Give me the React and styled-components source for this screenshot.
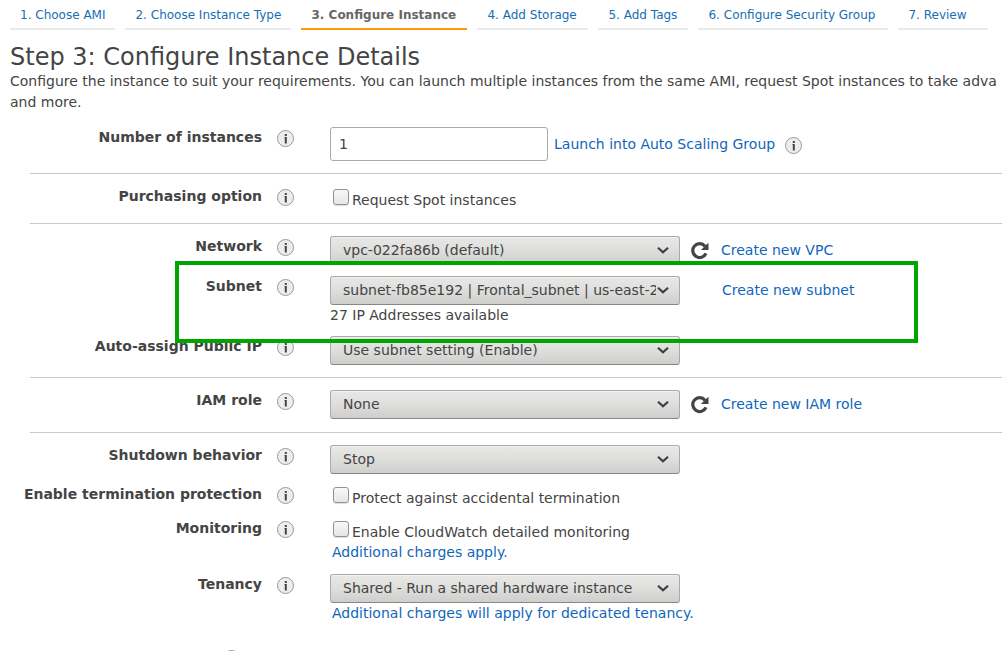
import React from "react";
import styled, { createGlobalStyle } from "styled-components";

const GlobalStyle = createGlobalStyle`
  * { box-sizing: border-box; }
  body {
    margin: 0;
    background: #fff;
    color: #444;
    font: 14px/21px "DejaVu Sans", Verdana, sans-serif;
  }
`;

const Page = styled.main`
  height: 100vh;
  overflow: hidden;
`;

const Steps = styled.nav`
  display: flex;
  gap: 10px;
  padding: 0 10px;
`;

const Step = styled.a`
  flex: none;
  min-width: ${(p) => p.$min}px;
  height: 30px;
  padding: 0 10px;
  border-bottom: 2px solid ${(p) => (p.$active ? "#ff9912" : "#eaeaea")};
  color: ${(p) => (p.$active ? "#666" : "#146eb4")};
  font-size: 12px;
  font-weight: ${(p) => (p.$active ? "bold" : "normal")};
  line-height: 30px;
  text-decoration: none;
  white-space: nowrap;
`;

const Title = styled.h1`
  margin: 0;
  padding: 13px 10px 0;
  font-size: 24px;
  font-weight: normal;
  line-height: 28px;
`;

const Intro = styled.p`
  margin: 0;
  padding: 0 10px 14px;
  white-space: nowrap;
`;

const Group = styled.div`
  display: flex;
  flex-direction: column;
  gap: 10px;
`;

const Divider = styled.hr`
  margin: 12px 0 12px 30px;
  border: 0;
  border-top: 1px solid #c8c8c8;
`;

const Row = styled.div`
  position: relative;
  display: grid;
  grid-template-columns: 262px 17px 1fr;
  align-items: start;
  min-height: ${(p) => p.$min || 24}px;
`;

const Label = styled.label`
  font-weight: bold;
  text-align: right;
  white-space: nowrap;
`;

const InfoButton = styled.button`
  display: block;
  flex: none;
  width: 18px;
  height: 18px;
  margin: ${(p) => (p.$inline ? "3px 0 0 10px" : "3px 0 0 15px")};
  padding: 0;
  border: 0;
  background: none;
  svg { display: block; }
`;

const Field = styled.div`
  padding-left: 51px;
`;

const Line = styled.div`
  display: flex;
  align-items: center;
`;

const TextInput = styled.input`
  width: 218px;
  height: 34px;
  margin: 0 6px 0 0;
  padding: 0 8px;
  border: 1px solid #aaa;
  border-radius: 3px;
  color: #444;
  font: inherit;
`;

const SelectBox = styled.span`
  position: relative;
  display: block;
  flex: none;
  width: 350px;
  height: 29px;
  svg {
    position: absolute;
    top: 10px;
    right: 11px;
    pointer-events: none;
  }
`;

const NativeSelect = styled.select`
  appearance: none;
  display: block;
  width: 100%;
  height: 100%;
  margin: 0;
  padding: 0 23px 0 12px;
  border: 1px solid #aaa;
  border-bottom-color: #888883;
  border-radius: 3px;
  background: linear-gradient(#e8e8e7, #dededd 50%, #cececc);
  box-shadow: inset 0 1px #f2f2f2;
  color: #444;
  font: inherit;
`;

const Refresh = styled.button`
  width: 18px;
  height: 18px;
  margin: 0 12px 0 11px;
  padding: 0;
  border: 0;
  background: none;
  svg { display: block; }
`;

const Link = styled.a`
  color: #1166bb;
  text-decoration: none;
  white-space: nowrap;
`;

const AsideLink = styled(Link)`
  margin-left: 42px;
`;

const Note = styled.div`
  padding-left: ${(p) => (p.$indent ? 2 : 0)}px;
`;

const CheckLine = styled.label`
  display: flex;
  align-items: flex-start;
  gap: 3px;
  height: 24px;
  padding: 3px 0 0 3px;
`;

const Checkbox = styled.input`
  appearance: none;
  width: 16px;
  height: 16px;
  margin: 0;
  border: 1px solid #92928e;
  border-radius: 3px;
  background: linear-gradient(#f8f8f8, #e6e6e5);
  box-shadow: 0 1px 1px #ddd;
`;

const CheckText = styled.span`
  line-height: 22px;
`;

const Highlight = styled.div`
  position: absolute;
  z-index: 1;
  top: -15px;
  bottom: -17px;
  left: 175px;
  width: 743px;
  border: 4px solid #00a500;
  pointer-events: none;
`;

const Advanced = styled.div`
  padding: 23px 0 0 208px;
`;

function Info({ inline }) {
  return (
    <InfoButton type="button" aria-label="Info" $inline={inline}>
      <svg width="18" height="18" viewBox="0 0 18 18" aria-hidden="true">
        <circle cx="8.5" cy="8.5" r="8" fill="#ededed" stroke="#999" />
        <path d="M7.4 7h2.4v6.6H7.8V7.8H7.4z" fill="#444" />
        <rect x="7.8" y="4" width="2" height="2" fill="#444" />
      </svg>
    </InfoButton>
  );
}

function Select({ id, children }) {
  return (
    <SelectBox>
      <NativeSelect id={id}>
        <option>{children}</option>
      </NativeSelect>
      <svg width="12" height="9" viewBox="0 0 12 9" aria-hidden="true">
        <path d="M1 1.8l5 4.5 5-4.5" fill="none" stroke="#3a3f41" strokeWidth="2.2" />
      </svg>
    </SelectBox>
  );
}

function RefreshButton() {
  return (
    <Refresh type="button" aria-label="Refresh">
      <svg width="18" height="18" viewBox="0 0 18 18" aria-hidden="true">
        <path d="M15 11.4A6.9 6.9 0 1 1 14 4.2" fill="none" stroke="#444" strokeWidth="3.2" />
        <path d="M17.5 .8v7.2h-7.5l2.2-2.2 2.2-2.4z" fill="#444" />
      </svg>
    </Refresh>
  );
}

function FormRow({ id, label, min, highlight, children }) {
  return (
    <Row $min={min}>
      <Label htmlFor={id}>{label}</Label>
      <Info />
      <Field>{children}</Field>
      {highlight && <Highlight />}
    </Row>
  );
}

function Check({ id, children }) {
  return (
    <CheckLine>
      <Checkbox type="checkbox" id={id} />
      <CheckText>{children}</CheckText>
    </CheckLine>
  );
}

const steps = [
  { name: "1. Choose AMI", min: 105 },
  { name: "2. Choose Instance Type", min: 166 },
  { name: "3. Configure Instance", min: 166 },
  { name: "4. Add Storage", min: 111 },
  { name: "5. Add Tags", min: 90 },
  { name: "6. Configure Security Group", min: 190 },
  { name: "7. Review", min: 90 },
];

export default function App() {
  return (
    <Page>
      <GlobalStyle />
      <Steps>
        {steps.map((s, i) => (
          <Step key={s.name} href="#" $min={s.min} $active={i === 2}>{s.name}</Step>
        ))}
      </Steps>
      <Title>Step 3: Configure Instance Details</Title>
      <Intro>
        Configure the instance to suit your requirements. You can launch multiple instances from
        the same AMI, request Spot instances to take adva
        <br />
        and more.
      </Intro>
      <form>
        <Group>
          <FormRow id="count" label="Number of instances">
            <Line>
              <TextInput id="count" type="text" defaultValue="1" />
              <Link href="#">Launch into Auto Scaling Group</Link>
              <Info inline />
            </Line>
          </FormRow>
        </Group>
        <Divider />
        <Group>
          <FormRow id="spot" label="Purchasing option" min={25}>
            <Check id="spot">Request Spot instances</Check>
          </FormRow>
        </Group>
        <Divider />
        <Group>
          <FormRow id="network" label="Network" min={30}>
            <Line>
              <Select id="network">vpc-022fa86b (default)</Select>
              <RefreshButton />
              <Link href="#">Create new VPC</Link>
            </Line>
          </FormRow>
          <FormRow id="subnet" label="Subnet" highlight>
            <Line>
              <Select id="subnet">subnet-fb85e192 | Frontal_subnet | us-east-2a</Select>
              <AsideLink href="#">Create new subnet</AsideLink>
            </Line>
            <Note>27 IP Addresses available</Note>
          </FormRow>
          <FormRow id="public-ip" label="Auto-assign Public IP">
            <Select id="public-ip">Use subnet setting (Enable)</Select>
          </FormRow>
        </Group>
        <Divider />
        <Group>
          <FormRow id="iam" label="IAM role" min={30}>
            <Line>
              <Select id="iam">None</Select>
              <RefreshButton />
              <Link href="#">Create new IAM role</Link>
            </Line>
          </FormRow>
        </Group>
        <Divider />
        <Group>
          <FormRow id="shutdown" label="Shutdown behavior">
            <Select id="shutdown">Stop</Select>
          </FormRow>
          <FormRow id="protect" label="Enable termination protection">
            <Check id="protect">Protect against accidental termination</Check>
          </FormRow>
          <FormRow id="monitoring" label="Monitoring" min={46}>
            <Check id="monitoring">Enable CloudWatch detailed monitoring</Check>
            <Note $indent><Link href="#">Additional charges apply.</Link></Note>
          </FormRow>
          <FormRow id="tenancy" label="Tenancy">
            <Select id="tenancy">Shared - Run a shared hardware instance</Select>
            <Note $indent>
              <Link href="#">Additional charges will apply for dedicated tenancy.</Link>
            </Note>
          </FormRow>
        </Group>
        <Advanced><Info /></Advanced>
      </form>
    </Page>
  );
}
